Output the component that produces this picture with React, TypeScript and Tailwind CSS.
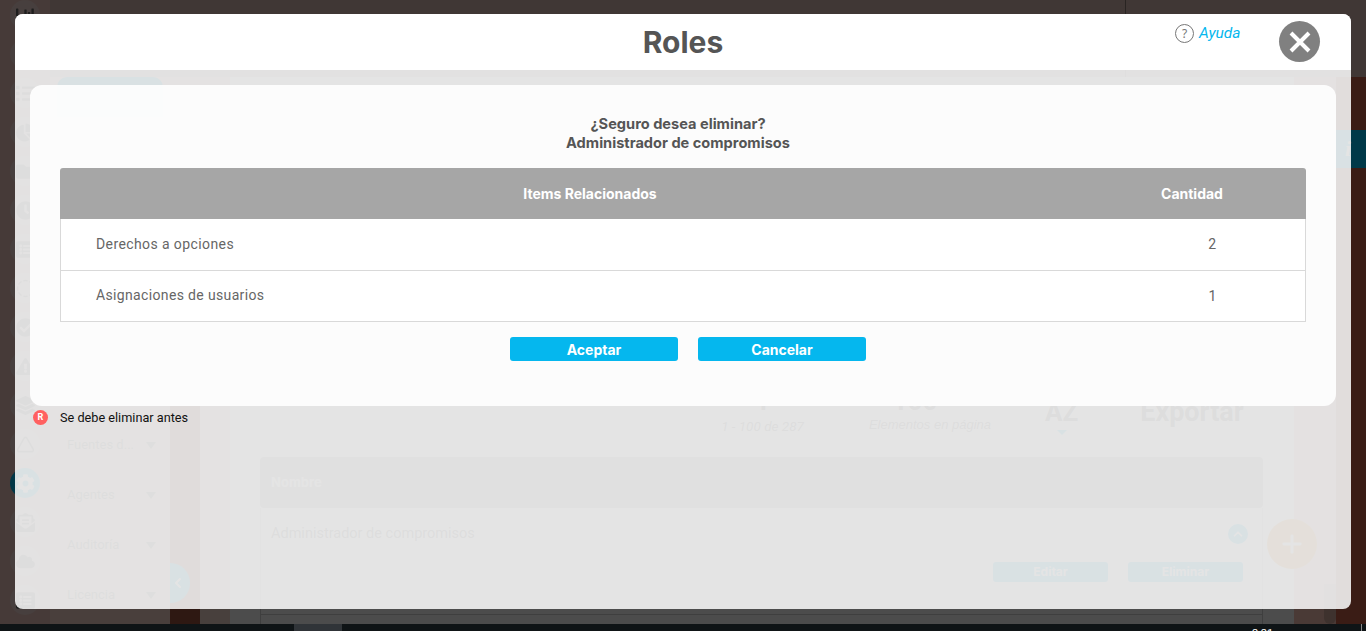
import { ChevronLeft, ChevronUp, CircleDashed, Plus, Triangle } from "lucide-react";
import {
  FaChartBar,
  FaChartPie,
  FaCheckCircle,
  FaClock,
  FaCloud,
  FaCog,
  FaEnvelopeOpenText,
  FaExclamationTriangle,
  FaFileAlt,
  FaFolder,
  FaLayerGroup,
  FaList,
  FaListAlt,
} from "react-icons/fa";

const SIDE_ICONS = [
  FaChartBar,
  FaFileAlt,
  FaList,
  FaChartPie,
  FaFolder,
  FaClock,
  FaListAlt,
  CircleDashed,
  FaCheckCircle,
  FaExclamationTriangle,
  FaLayerGroup,
  Triangle,
  FaCog,
  FaEnvelopeOpenText,
  FaCloud,
  FaListAlt,
];

const PANEL_ITEMS = ["Fuentes d...", "Agentes", "Auditoría", "Licencia"];

const RELATED = [
  { label: "Derechos a opciones", count: 2 },
  { label: "Asignaciones de usuarios", count: 1 },
];

function Caret() {
  return (
    <span className="w-0 h-0 border-l-[5px] border-r-[5px] border-t-[7px] border-l-transparent border-r-transparent border-t-[#777777]" />
  );
}

function BackgroundPage() {
  return (
    <div className="flex h-[624px] font-['Roboto',sans-serif]">
      {/* Sidebar */}
      <div className="w-[50px] shrink-0 bg-[#e9c1bb] flex flex-col items-center gap-[9px]">
        {SIDE_ICONS.map((Icon, i) => (
          <div
            key={i}
            className={
              i === 12
                ? "w-[30px] h-[30px] rounded-full bg-[#05b7ee] text-white flex items-center justify-center"
                : "w-[30px] h-[30px] rounded-full bg-white/30 text-[#666666] flex items-center justify-center"
            }
          >
            <Icon size={19} />
          </div>
        ))}
      </div>

      <div className="flex-1 flex flex-col min-w-0">
        {/* Top bar */}
        <div className="h-[77px] shrink-0 bg-[#d5bab1] flex justify-end">
          <div className="w-[241px] border-l border-[#8a7a74]" />
        </div>

        <div className="flex-1 flex min-h-0">
          {/* Menu panel */}
          <div className="w-[120px] shrink-0 bg-[#f5d3c8] flex flex-col px-[7px]">
            <div className="h-[40px] rounded-t-[10px] bg-[#05b7ee] w-[106px]" />
            <div className="mt-[318px] flex flex-col gap-[30px] pl-[10px] pr-[7px]">
              {PANEL_ITEMS.map((item) => (
                <div key={item} className="h-[20px] flex items-center justify-between text-[13px] text-[#666666]">
                  <span>{item}</span>
                  <Caret />
                </div>
              ))}
            </div>
          </div>

          {/* Strip with the collapse tab */}
          <div className="w-[30px] shrink-0 bg-[#99503c] flex flex-col">
            <div className="h-[329px] shrink-0 bg-[#f0d5cc]" />
            <div className="mt-[157px] w-[20px] h-[40px] rounded-r-full bg-[#05b7ee] text-white flex items-center">
              <ChevronLeft size={16} strokeWidth={3} />
            </div>
          </div>
          <div className="w-[30px] shrink-0 bg-[#f0d5cc]" />

          {/* Main content */}
          <div className="w-[1064px] shrink-0 bg-white pl-[30px] pr-[31px] flex flex-col">
            <div className="h-[316px] shrink-0" />
            <div className="h-[64px] shrink-0 flex items-start text-[#555555]">
              <div className="ml-[462px] w-[81px] flex flex-col items-center -mt-[7px]">
                <span className="text-[26px] font-bold leading-[30px]">1</span>
                <span className="text-[13.5px] italic whitespace-nowrap">1 - 100 de 287</span>
              </div>
              <div className="ml-[68px] w-[118px] flex flex-col items-center -mt-[7px]">
                <span className="text-[26px] font-bold leading-[30px] mr-[30px]">100</span>
                <span className="-mt-[1px] text-[13px] italic whitespace-nowrap font-['Liberation_Sans',sans-serif]">
                  Elementos en página
                </span>
              </div>
              <div className="ml-[56px] flex flex-col items-center">
                <span className="text-[26px] font-bold leading-[30px] mt-[4px]">AZ</span>
                <span className="mt-[3px] w-0 h-0 border-l-[5px] border-r-[5px] border-t-[5px] border-l-transparent border-r-transparent border-t-[#05b7ee]" />
              </div>
              <span className="ml-[62px] text-[27px] font-bold leading-[30px] mt-[4px]">Exportar</span>
            </div>
            <div className="h-[51px] shrink-0 bg-[#a6a6a6] rounded-[4px] flex items-center px-[11px] font-['Inter',sans-serif] font-bold text-[13px] text-white">
              Nombre
            </div>
            <div className="flex-1 border-x border-[#d2d2d2] flex flex-col">
              <div className="h-[107px] shrink-0 border-b border-[#d2d2d2] relative">
                <div className="flex items-center justify-between pl-[10px] pr-[14px] pt-[15px]">
                  <span className="text-[14.5px] text-[#555555]">Administrador de compromisos</span>
                  <span className="w-[20px] h-[20px] rounded-full bg-[#05b7ee] text-white flex items-center justify-center">
                    <ChevronUp size={14} strokeWidth={3} />
                  </span>
                </div>
                <div className="mt-[17px] flex justify-end gap-[20px] pr-[19px] font-['Inter',sans-serif] font-bold text-[12px] text-white">
                  <span className="w-[115px] h-[20px] rounded-[3px] bg-[#05b7ee] flex items-center justify-center">Editar</span>
                  <span className="w-[115px] h-[20px] rounded-[3px] bg-[#05b7ee] flex items-center justify-center">Eliminar</span>
                </div>
              </div>
            </div>
          </div>

          <div className="w-[42px] shrink-0 bg-[#f7c2b4] flex justify-end items-end">
            <div className="w-[12px] h-[40px] rounded-b-[6px] bg-[#cfa79c]" />
          </div>

          {/* Right edge with the info tab */}
          <div className="flex-1 bg-[#c15e46] pt-[53px]">
            <div className="h-[38px] bg-[#00c0f5] text-white font-bold italic text-[22px] leading-[38px] pl-[9px] font-['Liberation_Serif',serif]">
              i
            </div>
          </div>
        </div>
      </div>
    </div>
  );
}

function Modal() {
  return (
    <div className="absolute left-[15px] top-[14px] w-[1336px] h-[595px] rounded-[8px] overflow-hidden bg-white/85 flex flex-col">
      <div className="h-[56px] shrink-0 bg-white relative flex items-center justify-center">
        <h1 className="font-['Inter',sans-serif] font-bold text-[30px] text-[#555555] leading-none">Roles</h1>
        <div className="absolute left-[1160px] top-[8px] flex items-center gap-[5px]">
          <span className="w-[19px] h-[19px] rounded-full border border-[#777777] text-[#777777] text-[12px] leading-none flex items-center justify-center">
            ?
          </span>
          <span className="text-[15.5px] italic text-[#05b7ee] font-['Roboto',sans-serif]">Ayuda</span>
        </div>
        <button className="absolute left-[1264px] top-[7px] w-[41px] h-[41px] rounded-full bg-[#808080] flex items-center justify-center">
          <svg width="22" height="22" viewBox="0 0 22 22" fill="none" stroke="#ffffff" strokeWidth="4">
            <path d="M2 2 L20 20 M20 2 L2 20" />
          </svg>
        </button>
      </div>

      <div className="mt-[15px] mx-[15px] h-[321px] shrink-0 rounded-[12px] bg-white/90 px-[30px] pt-[30px] flex flex-col">
        <div className="pr-[10px] text-center font-['Inter',sans-serif] font-bold text-[14.6px] leading-[19px] text-[#555555]">
          <p>¿Seguro desea eliminar?</p>
          <p>Administrador de compromisos</p>
        </div>

        <div className="mt-[15px] font-['Roboto',sans-serif]">
          <div className="h-[51px] rounded-t-[3px] bg-[#a6a6a6] grid grid-cols-[1060px_1fr] items-center font-['Inter',sans-serif] font-bold text-[14px] text-white">
            <span className="text-center">Items Relacionados</span>
            <span className="text-center pr-[42px]">Cantidad</span>
          </div>
          <div className="bg-white border-x border-b border-[#d9d9d9]">
            {RELATED.map((row, i) => (
              <div
                key={row.label}
                className={
                  i === 0
                    ? "h-[52px] grid grid-cols-[1059px_1fr] items-center border-b border-[#d9d9d9] text-[14px] tracking-[0.4px] text-[#666666]"
                    : "h-[50px] grid grid-cols-[1059px_1fr] items-center text-[14px] tracking-[0.35px] text-[#666666]"
                }
              >
                <span className={i === 0 ? "pl-[35px]" : "pl-[35px] pb-[2px]"}>{row.label}</span>
                <span className="text-center">{row.count}</span>
              </div>
            ))}
          </div>
        </div>

        <div className="mt-[15px] ml-[10px] flex justify-center gap-[20px] font-['Inter',sans-serif] font-bold text-[14px] text-white">
          <button className="w-[168px] h-[24px] rounded-[3px] bg-[#05b7ee]">Aceptar</button>
          <button className="w-[168px] h-[24px] rounded-[3px] bg-[#05b7ee]">Cancelar</button>
        </div>
      </div>

      <div className="mt-[2px] ml-[18px] flex items-center gap-[12px] font-['Roboto',sans-serif] text-[12.7px] text-[#111111]">
        <span className="w-[15px] h-[15px] rounded-full bg-[#ff6060] text-white text-[9px] font-bold flex items-center justify-center">
          R
        </span>
        <span>Se debe eliminar antes</span>
      </div>
    </div>
  );
}

export default function App() {
  return (
    <div className="w-[1366px] h-[631px] overflow-hidden bg-[#0f1416] relative">
      <BackgroundPage />
      {/* Floating add button */}
      <div className="absolute left-[1267px] top-[519px] w-[50px] h-[50px] rounded-full bg-[#f7941d] text-white flex items-center justify-center">
        <Plus size={28} strokeWidth={2.5} />
      </div>
      <div className="absolute left-0 top-0 w-[1366px] h-[624px] bg-black/70" />
      <Modal />
      {/* Taskbar */}
      <div className="h-[7px] flex relative">
        <div className="ml-[294px] w-[48px] bg-[#303438]" />
        <span className="absolute left-[1252px] top-[4px] text-[11px] leading-none text-white font-['Roboto',sans-serif]">
          2:21
        </span>
        <div className="absolute left-[1361px] top-0 w-px h-[7px] bg-[#888888]" />
      </div>
    </div>
  );
}
